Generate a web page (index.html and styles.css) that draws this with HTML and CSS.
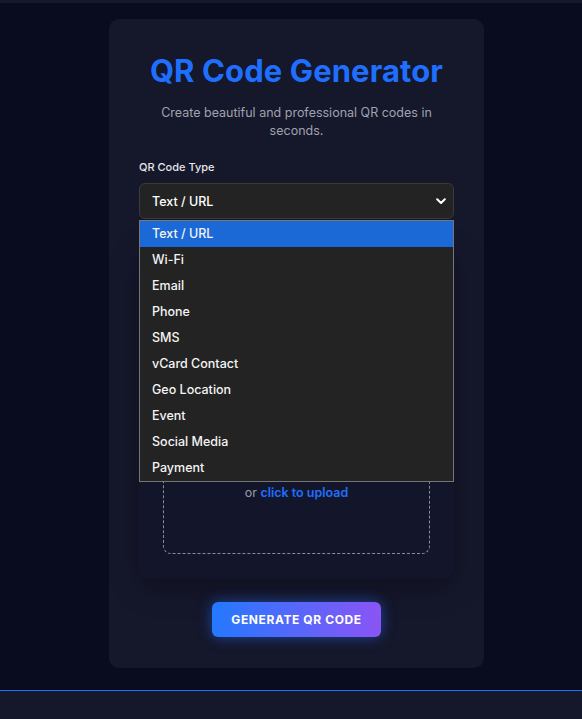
FILE: index.html
```html
<!DOCTYPE html>
<html lang="en">
<head>
<meta charset="utf-8">
<title>QR Code Generator</title>
<link rel="stylesheet" href="styles.css">
</head>
<body>
<div class="topbar"></div>
<main class="page">
  <section class="card">
    <h1 class="title">QR Code Generator</h1>
    <p class="subtitle">Create beautiful and professional QR codes in<br>seconds.</p>

    <div class="field">
      <label class="label">QR Code Type</label>
      <div class="select-wrap">
        <div class="select">
          <span>Text / URL</span>
          <svg class="chev" width="10" height="7" viewBox="0 0 10 7"><path d="M1.2 1.3 L5 5 L8.8 1.3" fill="none" stroke="#fff" stroke-width="2" stroke-linecap="round" stroke-linejoin="round"/></svg>
        </div>
        <ul class="dropdown">
          <li class="opt active">Text / URL</li>
          <li class="opt">Wi-Fi</li>
          <li class="opt">Email</li>
          <li class="opt">Phone</li>
          <li class="opt">SMS</li>
          <li class="opt">vCard Contact</li>
          <li class="opt">Geo Location</li>
          <li class="opt">Event</li>
          <li class="opt">Social Media</li>
          <li class="opt">Payment</li>
        </ul>
      </div>
    </div>

    <div class="panel">
      <div class="label-space"></div>
      <div class="textarea"></div>
      <div class="label-space"></div>
      <div class="upload">
        <div class="upload-icon"></div>
        <div class="upload-line"></div>
        <p class="upload-text">or <span class="link">click to upload</span></p>
      </div>
    </div>

    <div class="actions">
      <button class="btn">GENERATE QR CODE</button>
    </div>
  </section>
</main>
<footer class="footer"></footer>
</body>
</html>
```

FILE: styles.css
```css
* { box-sizing: border-box; }
html, body { margin: 0; padding: 0; }
body {
  background: #090b1e;
  font-family: "Inter", "Open Sans", sans-serif;
  color: #fff;
  height: 719px;
  overflow: hidden;
}
.topbar { height: 3px; background: #15172b; }
.page { padding-top: 16px; }
.card {
  width: 375px;
  margin-left: 109px;
  background: #15172b;
  border-radius: 10px;
  padding: 30px 30px 31px;
  height: 649px;
}
.title {
  margin: 0;
  text-align: center;
  color: #1f6fff;
  font-size: 31px;
  font-weight: 700;
  line-height: 36px;
  padding-top: 4px;
  letter-spacing: 0.1px;
}
.subtitle {
  margin: 15px 0 0;
  text-align: center;
  color: #a0a2ae;
  font-size: 12.5px;
  line-height: 18px;
}
.field { margin-top: 19px; position: relative; }
.label {
  display: block;
  font-size: 11px;
  font-weight: 500;
  color: #e4e5ea;
  line-height: 16px;
  margin-bottom: 8px;
}
.select-wrap { position: relative; }
.select {
  height: 36px;
  background: #232323;
  border: 1px solid #3a3a3c;
  border-radius: 6px;
  display: flex;
  align-items: center;
  justify-content: space-between;
  padding: 0 7px 0 12px;
  font-size: 12.5px;
  font-weight: 500;
}
.chev { display: block; }
.dropdown {
  position: absolute;
  top: 37px;
  left: 0;
  right: 0;
  margin: 0;
  padding: 0;
  list-style: none;
  background: #232323;
  border: 1px solid #767676;
  z-index: 10;
}
.opt {
  height: 26px;
  line-height: 26px;
  padding-left: 12px;
  font-size: 12.5px;
  font-weight: 500;
  color: #f4f4f4;
}
.opt.active { background: #1b69d6; }
.panel {
  margin-top: 24px;
  background: #13152a;
  border-radius: 10px;
  padding: 24px;
  box-shadow: 0 10px 30px rgba(0, 0, 0, 0.25);
}
.label-space { height: 24px; }
.textarea {
  height: 78px;
  background: #232323;
  border-radius: 6px;
  margin-bottom: 14px;
}
.upload {
  border: 1px dashed #8a8c96;
  border-radius: 8px;
  padding: 20px 10px 51px;
  text-align: center;
}
.upload-icon { width: 30px; height: 30px; margin: 0 auto 8px; }
.upload-line { height: 18px; }
.upload-text {
  margin: 0;
  font-size: 12.5px;
  line-height: 18px;
  color: #9a9cab;
}
.link { color: #1f6fff; font-weight: 600; }
.actions { display: flex; justify-content: center; margin-top: 24px; }
.btn {
  height: 35px;
  padding: 0 19px;
  border: none;
  border-radius: 6px;
  background: linear-gradient(90deg, #2479ff 0%, #8a55f5 100%);
  color: #fff;
  font-family: inherit;
  font-size: 12px;
  font-weight: 700;
  letter-spacing: 0.6px;
  box-shadow: 0 0 14px rgba(40, 110, 255, 0.55);
}
.footer {
  margin-top: 22px;
  border-top: 1px solid #1f6fff;
  background: #15172b;
  height: 40px;
}
```
